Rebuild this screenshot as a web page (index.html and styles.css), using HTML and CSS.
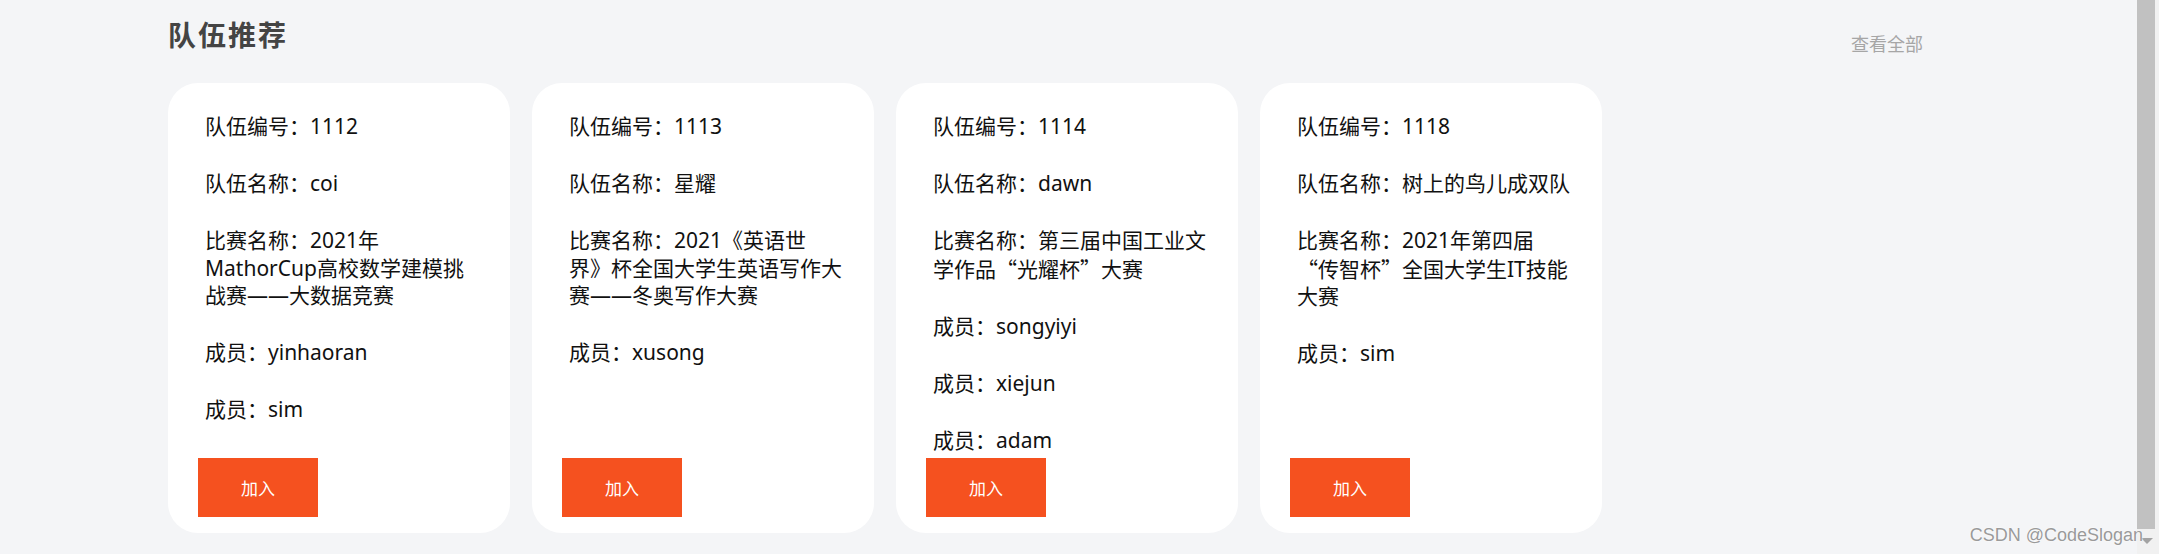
FILE: index.html
```
<!DOCTYPE html>
<html lang="zh-CN">
<head>
<meta charset="utf-8">
<title>队伍推荐</title>
<link rel="stylesheet" href="styles.css">
</head>
<body>
<div class="page">
  <main class="main">
    <header class="section-head">
      <h2 class="section-title">队伍推荐</h2>
      <a class="more" href="#">查看全部</a>
    </header>
    <section class="cards">
      <article class="card">
        <div class="info">
          <p>队伍编号：1112</p>
          <p>队伍名称：coi</p>
          <p>比赛名称：2021年MathorCup高校数学建模挑战赛——大数据竞赛</p>
          <p>成员：yinhaoran</p>
          <p>成员：sim</p>
        </div>
        <button class="join">加入</button>
      </article>
      <article class="card">
        <div class="info">
          <p>队伍编号：1113</p>
          <p>队伍名称：星耀</p>
          <p>比赛名称：2021《英语世界》杯全国大学生英语写作大赛——冬奥写作大赛</p>
          <p>成员：xusong</p>
        </div>
        <button class="join">加入</button>
      </article>
      <article class="card">
        <div class="info">
          <p>队伍编号：1114</p>
          <p>队伍名称：dawn</p>
          <p>比赛名称：第三届中国工业文学作品<span class="q">“</span>光耀杯<span class="q">”</span>大赛</p>
          <p>成员：songyiyi</p>
          <p>成员：xiejun</p>
          <p>成员：adam</p>
        </div>
        <button class="join">加入</button>
      </article>
      <article class="card">
        <div class="info">
          <p>队伍编号：1118</p>
          <p>队伍名称：树上的鸟儿成双队</p>
          <p>比赛名称：2021年第四届<span class="q">“</span>传智杯<span class="q">”</span>全国大学生IT技能大赛</p>
          <p>成员：sim</p>
        </div>
        <button class="join">加入</button>
      </article>
    </section>
  </main>
  <div class="scrollbar">
    <div class="thumb"></div>
    <div class="arrow"></div>
  </div>
</div>
<div class="watermark">CSDN @CodeSlogan</div>
</body>
</html>
```

FILE: styles.css
```
html, body {
  margin: 0;
  padding: 0;
}

body {
  background: #f4f5f7;
  font-family: "Noto Sans", "Noto Sans CJK SC", sans-serif;
  color: #111;
  width: 2159px;
  height: 554px;
  overflow: hidden;
  position: relative;
}

.page {
  display: flex;
  height: 554px;
}

.main {
  flex: 1;
  padding: 16px 0 0 168px;
}

.section-head {
  display: flex;
  justify-content: space-between;
  align-items: flex-start;
  width: 1755px;
  height: 36px;
}

.section-title {
  margin: 0;
  font-family: "Noto Sans CJK SC", sans-serif;
  font-size: 28px;
  line-height: 36px;
  font-weight: 700;
  letter-spacing: 2px;
  color: #444;
}

.more {
  margin-top: 15px;
  font-family: "Noto Sans CJK SC", sans-serif;
  font-size: 18px;
  line-height: 24px;
  color: #a6a6a6;
  text-decoration: none;
}

.cards {
  display: flex;
  gap: 22px;
  margin-top: 31px;
}

.card {
  box-sizing: border-box;
  width: 342px;
  height: 450px;
  background: #fff;
  border-radius: 30px;
  padding: 30px 29px 16px 30px;
  display: flex;
  flex-direction: column;
}

.info {
  flex: 1 1 0;
  min-height: 0;
  padding-left: 7px;
  text-spacing-trim: space-all;
}

.info p {
  margin: 0 0 29.5px;
  font-size: 21px;
  line-height: 27.5px;
}

.info p:last-child {
  margin-bottom: 0;
}

.q {
  font-family: "Noto Sans CJK SC", sans-serif;
}

.join {
  flex-shrink: 0;
  width: 120px;
  height: 59px;
  border: none;
  padding: 0;
  background: #f5511f;
  color: #fff;
  font-family: "Noto Sans CJK SC", sans-serif;
  font-size: 17px;
  cursor: pointer;
}

.scrollbar {
  width: 22px;
  background: #f1f1f1;
  display: flex;
  flex-direction: column;
}

.thumb {
  width: 18px;
  height: 529px;
  background: #c1c1c1;
}

.arrow {
  width: 0;
  height: 0;
  margin: 9px 0 0 4px;
  border-left: 6px solid transparent;
  border-right: 6px solid transparent;
  border-top: 6px solid #a3a3a3;
}

.watermark {
  position: absolute;
  right: 16px;
  bottom: 9px;
  font-family: "Liberation Sans", Arial, sans-serif;
  font-size: 18px;
  line-height: 20px;
  color: #9a9a9a;
  text-shadow: 0 0 2px #fff, 0 0 1px #fff;
}
```
